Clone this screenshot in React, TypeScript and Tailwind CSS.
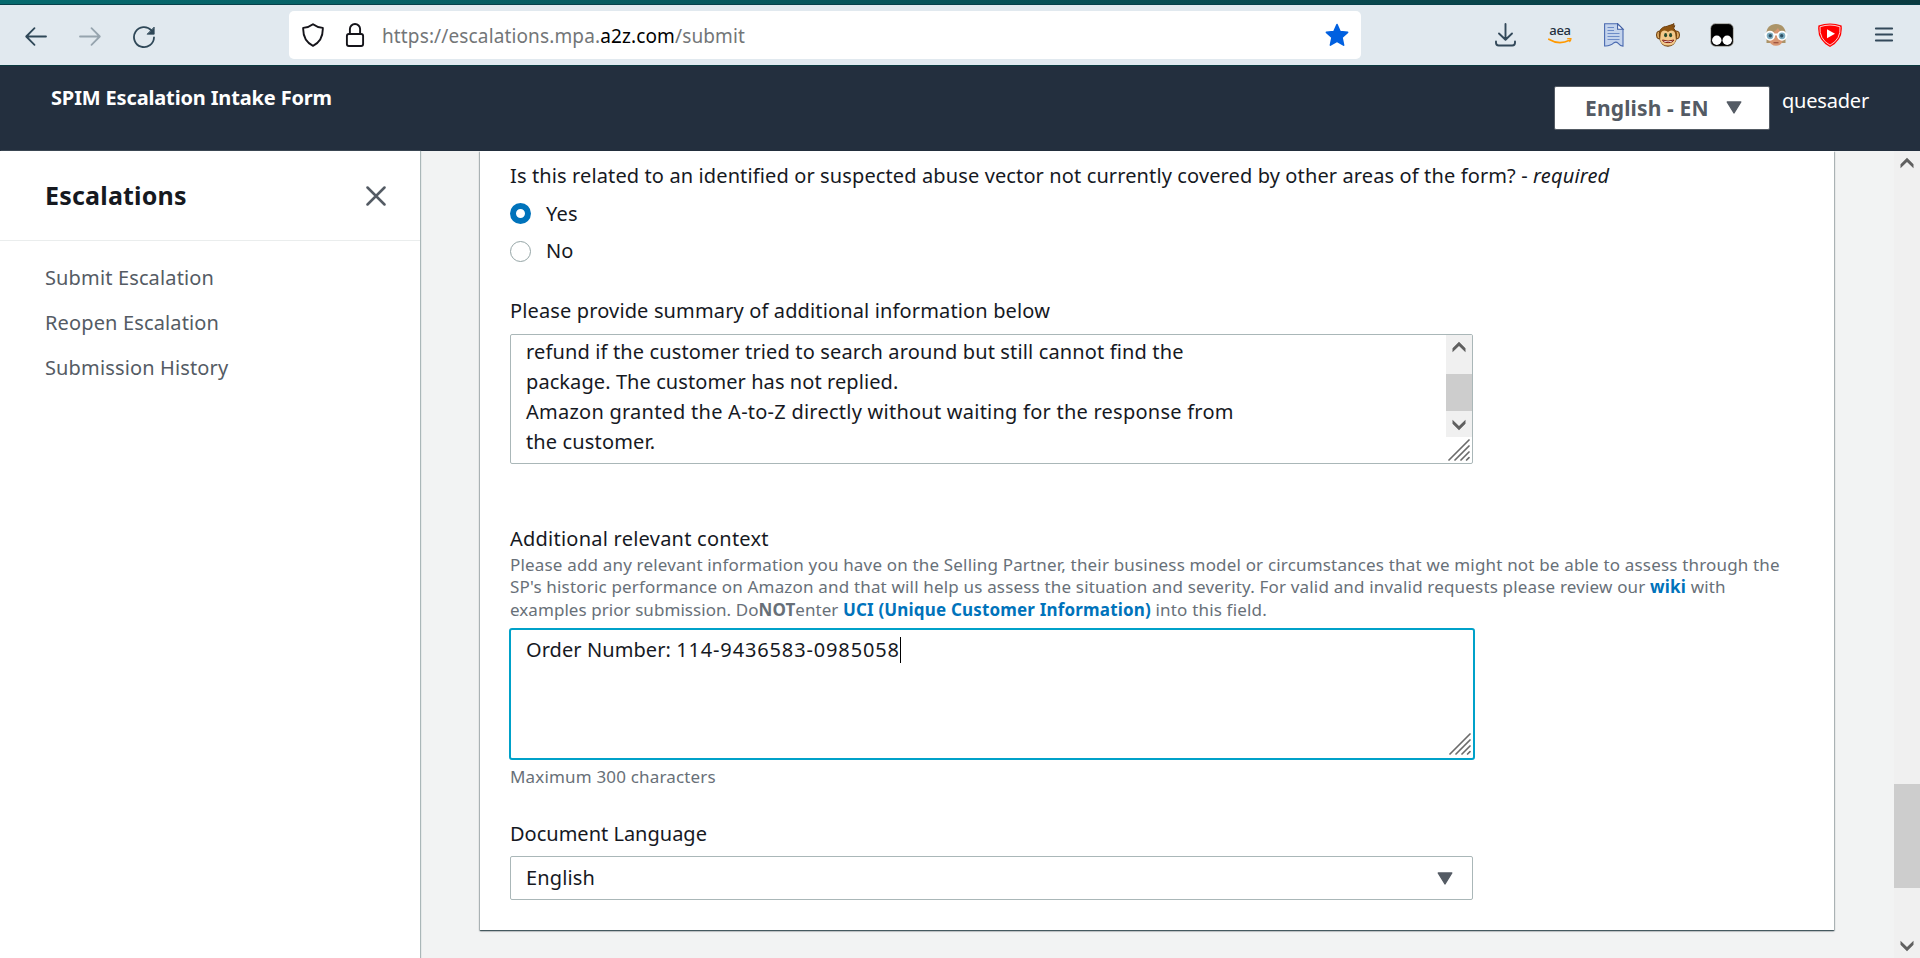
import React, { useState } from 'react'

const navItems = ['Submit Escalation', 'Reopen Escalation', 'Submission History']

function ResizeGrip() {
  return (
    <svg className="block h-[22px] w-[22px]" viewBox="0 0 22 22" stroke="#6b6b6b" strokeWidth="1.7" strokeLinecap="round">
      <path d="M1 21 21 1M7 21 21 7M13 21l8-8M18.6 21l2.400-2.400" />
    </svg>
  )
}

function ScrollArrow({ down }: { down?: boolean }) {
  return (
    <svg className="block h-3 w-4" viewBox="0 0 16 12" fill="#606060">
      {down ? (
        <path d="M1.500.8v4L8 11.200l6.500-6.400v-4L8 7Z" />
      ) : (
        <path d="M1.500 11.200v-4L8 .8l6.500 6.400v4L8 5Z" />
      )}
    </svg>
  )
}

function Caret() {
  return (
    <svg className="h-[13px] w-4" viewBox="0 0 16 13">
      <path d="M1.2 1h13.6L8 12Z" fill="#545b64" stroke="#545b64" strokeWidth="1.4" strokeLinejoin="round" />
    </svg>
  )
}

function BrowserBar() {
  return (
    <div>
      <div className="h-[5px] border-b border-[#06404a] bg-gradient-to-r from-[#066a6e] via-[#075258] to-[#0a3a40]" />
      <div className="flex h-[60px] items-center bg-[#e1e9ef] pl-6 pr-6">
        <div className="flex gap-[30px] pb-px pt-1">
          <svg className="h-6 w-6" viewBox="0 0 24 24" fill="none" stroke="#2f4858" strokeWidth="1.8" strokeLinecap="round" strokeLinejoin="round">
            <path d="M22 11.5H2.4M10.5 3.2 2.2 11.5l8.3 8.3" />
          </svg>
          <svg className="h-6 w-6" viewBox="0 0 24 24" fill="none" stroke="#96a4ae" strokeWidth="1.8" strokeLinecap="round" strokeLinejoin="round">
            <path d="M2 11.5h19.6M13.5 3.2l8.3 8.3-8.3 8.3" />
          </svg>
          <svg className="h-6 w-6" viewBox="0 0 24 24" fill="none" stroke="#2f4858" strokeWidth="1.8" strokeLinecap="round">
            <path d="M19.4 5.4A10 10 0 1 0 22 12.5" />
            <path d="M22.2 2.4v6.8h-6.8Z" fill="#2f4858" strokeWidth=".8" strokeLinejoin="round" />
          </svg>
        </div>

        <div className="ml-[133px] flex h-12 w-[1072px] items-center rounded-[5px] bg-white pl-3 pr-3">
          <svg className="h-6 w-6" viewBox="0 0 24 24" fill="none" stroke="#15141a" strokeWidth="1.9" strokeLinejoin="round">
            <path d="M12 1.2c2.700 2.100 5.900 3.300 9.800 3.700.3 7.800-2 14.100-9.800 18C4.200 19 1.900 12.700 2.200 4.900 6.100 4.500 9.300 3.300 12 1.200Z" />
          </svg>
          <svg className="ml-[18px] h-6 w-6" viewBox="0 0 24 24" fill="none" stroke="#15141a" strokeWidth="1.9">
            <rect x="3.9" y="11" width="16.2" height="12" rx="2" />
            <path d="M6.900 11V6.100a5.100 5.100 0 0 1 10.200 0V11" />
          </svg>
          <div className="ml-[15px] grow whitespace-nowrap pt-[3px] text-[19px] tracking-[0.13px] text-[#737678]">
            https://escalations.mpa.<span className="text-black">a2z.com</span>/submit
          </div>
          <svg className="h-6 w-6" viewBox="0 0 24 24">
            <path
              d="m12 1.500 3.100 7 7.500.8-5.600 5.200 1.600 7.600L12 18.300l-6.600 3.800L7 14.500 1.400 9.300l7.500-.8Z"
              fill="#0060e0"
              stroke="#0060e0"
              strokeWidth="1.6"
              strokeLinejoin="round"
            />
          </svg>
        </div>

        {/* downloads, extensions, menu */}
        <div className="ml-auto flex gap-[30px]">
          <svg className="h-6 w-6" viewBox="0 0 24 24" fill="none" stroke="#33495a" strokeWidth="1.9" strokeLinecap="round" strokeLinejoin="round">
            <path d="M11.500 1v15.500M5 10.500l6.500 6.200L18 10.500M2 18.500v1.300q0 2.700 2.700 2.700h13.600q2.700 0 2.700-2.700v-1.300" />
          </svg>

          <div className="flex h-6 w-6 flex-col items-center">
            <span className="text-[13px] font-medium leading-[15px] tracking-[-0.3px] text-[#232f3e]">aea</span>
            <svg className="h-2 w-6" viewBox="0 0 24 8" fill="none" stroke="#ff9900" strokeLinecap="round">
              <path d="M.8 1.200Q11 7.400 21.500 2.200" strokeWidth="1.6" />
              <path d="M19.500.8q2-.6 3.500-.2-.1 1.600-1.300 3" strokeWidth="1.2" />
            </svg>
          </div>

          <svg className="h-6 w-6" viewBox="0 0 24 24">
            <path d="M2.600.8h13l5.400 5.400v17q-3-.4-5-3-1.800-2-4-.5-3.500 3.600-9.400 3.300Z" fill="#c3d3ec" stroke="#4a6ab0" strokeWidth="1.1" />
            <path d="M15.600.8v5.400H21Z" fill="#fff" stroke="#3e5da2" strokeWidth="1.1" />
            <path d="M5.500 4.500h6.500M5.500 7.500h6.500M5.500 10.500h12M5.500 13.500h12M5.500 16.500h12" stroke="#6d8cc8" strokeWidth="1" />
          </svg>

          <svg className="h-6 w-6" viewBox="0 0 24 24">
            <g stroke="#6b3d0c" strokeWidth="1">
              <ellipse cx="3.2" cy="12" rx="2.7" ry="4" fill="#dba860" />
              <ellipse cx="20.8" cy="12" rx="2.7" ry="4" fill="#dba860" />
              <path d="M3.500 13C2.500 6 7 3.500 11 3.400 13 2 15.500 2.500 18 .6q0 1.500-1.400 2.800 1.500-.2 2.200-.8-.4 1.600-1.300 2.500 3.500 3 3 8.400-.8 9.500-8.500 9.700T3.500 13Z" fill="#8f5512" />
            </g>
            <path d="M4.800 11q.3-3.600 3.900-3.600 2 0 3.300 1.500 1.300-1.500 3.300-1.500 3.600 0 3.900 3.600l.7 5.500q-.7 6-7.900 6t-7.900-6Z" fill="#f2c98b" />
            <ellipse cx="9.6" cy="12.2" rx="1.5" ry="2.1" fill="#264a2c" />
            <ellipse cx="14.6" cy="12.2" rx="1.5" ry="2.1" fill="#264a2c" />
            <path d="M6.500 17q5.500 2.200 11.300 0-.8 2.600-5.700 2.600T6.500 17Z" fill="#fff" stroke="#862015" strokeWidth="1" />
          </svg>

          <svg className="h-6 w-6" viewBox="0 0 24 24">
            <rect x=".6" y=".6" width="22.800" height="22.800" rx="5" fill="#000" stroke="#c9c9c4" strokeWidth=".8" />
            <circle cx="6.8" cy="17.3" r="4.7" fill="#fff" />
            <circle cx="17.2" cy="17.3" r="4.7" fill="#fff" />
          </svg>

          <svg className="h-6 w-6" viewBox="0 0 24 24">
            <path d="M2.500 20V10C2.500 4.500 6.500 1 12 1s9.500 3.500 9.500 9v10Z" fill="#ab9468" />
            <path d="M5 11q5-1 9-6 1.500 4 5 5.500V17q-1.500 5.800-7 5.800T5 17Z" fill="#d89672" />
            <path d="M9.500 19.700h5" stroke="#9a4f3c" strokeWidth="1.2" />
            <path d="M.5 11.500h23" stroke="#fff" strokeWidth="2" />
            <circle cx="6" cy="12.800" r="4.2" fill="#7eaec2" stroke="#fff" strokeWidth="1.7" />
            <circle cx="18" cy="12.800" r="4.2" fill="#7eaec2" stroke="#fff" strokeWidth="1.7" />
            <circle cx="6.3" cy="12.800" r="1.7" fill="#2f5063" />
            <circle cx="17.7" cy="12.800" r="1.7" fill="#2f5063" />
          </svg>

          <svg className="h-6 w-6" viewBox="0 0 24 24">
            <path d="M.4 2.500Q12-1.500 23.600 2.500 25.500 17 12 23.900-1.500 17 .4 2.500Z" fill="#f00" />
            <path d="M2 3.800Q12 .3 22 3.800 23 16.300 12 22.100 1 16.300 2 3.800Z" fill="none" stroke="#fff" strokeWidth=".8" />
            <path d="m9 6.300 8 4.500-8 4.500Z" fill="#fff" />
          </svg>

          <svg className="h-6 w-6" viewBox="0 0 24 24" stroke="#33495a" strokeWidth="1.8" strokeLinecap="round">
            <path d="M3.800 5.500h16.400M3.800 11.500h16.400M3.800 17.500h16.400" />
          </svg>
        </div>
      </div>
    </div>
  )
}

function Header() {
  return (
    <header className="flex h-[86px] items-start justify-between border-t border-[#0b3a40] bg-[#232f3e] pl-[51px] pr-[51px] text-white">
      <h1 className="pt-[17px] text-[20px] font-bold leading-[30px] tracking-[-0.15px]">SPIM Escalation Intake Form</h1>
      <div className="flex gap-3">
        <button className="mt-5 flex h-11 w-[216px] items-center rounded-[2px] border border-[#545b64] bg-white pb-px pl-[30px] text-[#545b64]">
          <span className="whitespace-nowrap text-[21px] font-bold leading-[30px] tracking-[0.15px]">English - EN</span>
          <span className="ml-[17px] flex">
            <Caret />
          </span>
        </button>
        <span className="pt-[21px] text-[20px] leading-[28px] tracking-[-0.2px]">quesader</span>
      </div>
    </header>
  )
}

function Sidebar() {
  return (
    <aside className="z-10 w-[420px] shrink-0 bg-white shadow-[1px_0_1px_0_#aab7b8]">
      <div className="flex h-[90px] items-center justify-between border-b border-[#eaeded] pl-[45px] pr-[34px]">
        <h2 className="pb-0.5 text-[25px] font-bold leading-[30px] tracking-[0.2px] text-[#16191f]">Escalations</h2>
        <svg className="h-5 w-5" viewBox="0 0 20 20" stroke="#545b64" strokeWidth="2.5" strokeLinecap="round">
          <path d="m1.500 1.500 17 17M18.500 1.500l-17 17" />
        </svg>
      </div>
      <nav className="flex flex-col gap-[15px] pl-[45px] pt-[22px] text-[20px] leading-[30px] tracking-[0.14px] text-[#545b64]">
        {navItems.map((item) => (
          <a key={item}>{item}</a>
        ))}
      </nav>
    </aside>
  )
}

function Radio({ label, checked, onSelect }: { label: string; checked: boolean; onSelect: () => void }) {
  return (
    <div className="flex h-[30px] items-center gap-[15px]" onClick={onSelect}>
      {checked ? (
        <span className="-mt-px h-[21px] w-[21px] rounded-full border-[6px] border-[#0073bb] bg-white" />
      ) : (
        <span className="mt-px h-[21px] w-[21px] rounded-full border border-[#95a5a6] bg-white" />
      )}
      <span>{label}</span>
    </div>
  )
}

export default function App() {
  const [abuseVector, setAbuseVector] = useState('Yes')

  return (
    <div className="flex h-[958px] w-[1920px] flex-col overflow-hidden font-['Noto_Sans','Open_Sans',sans-serif]">
      <BrowserBar />
      <Header />
      <div className="flex min-h-0 grow">
        <Sidebar />

        <main className="grow bg-[#f2f3f3] pl-[60px]">
          <section className="h-[779px] w-[1354px] bg-white pl-[30px] pt-2.5 text-[20px] leading-[30px] tracking-[0.14px] text-[#16191f] shadow-[0_1px_1px_0_rgba(0,28,36,0.5),1px_1px_1px_0_rgba(0,28,36,0.15),-1px_1px_1px_0_rgba(0,28,36,0.15),0_1px_2px_0_rgba(0,28,36,0.3)]">
            <div className="whitespace-nowrap tracking-[0.12px]">
              Is this related to an identified or suspected abuse vector not currently covered by other areas of the form? -{' '}
              <i className="tracking-[0.15px]">required</i>
            </div>
            <div className="mt-2 flex flex-col gap-[7px]">
              {['Yes', 'No'].map((option) => (
                <Radio key={option} label={option} checked={abuseVector === option} onSelect={() => setAbuseVector(option)} />
              ))}
            </div>

            <div className="mt-[30px]">Please provide summary of additional information below</div>
            <div className="mt-2 flex h-[130px] w-[963px] justify-between overflow-hidden rounded-[2px] border border-[#aab7b8] pl-[15px]">
              <div className="whitespace-nowrap pt-0.5">
                <div>refund if the customer tried to search around but still cannot find the</div>
                <div className="tracking-[0.08px]">package. The customer has not replied.</div>
                <div className="tracking-[0.24px]">Amazon granted the A-to-Z directly without waiting for the response from</div>
                <div>the customer.</div>
              </div>
              <div className="flex w-[26px] flex-col items-center">
                <div className="flex h-[102px] w-full flex-col items-center bg-[#f0f0f0] pt-1.5">
                  <ScrollArrow />
                  <div className="mt-[21px] h-[37px] w-full bg-[#cdcdcd]" />
                  <div className="mt-2">
                    <ScrollArrow down />
                  </div>
                </div>
                <div className="mt-0.5">
                  <ResizeGrip />
                </div>
              </div>
            </div>

            <div className="mt-[60px] tracking-[0.24px]">Additional relevant context</div>
            <div className="whitespace-nowrap text-[17px] leading-[22.4px] tracking-[0.175px] text-[#687078]">
              Please add any relevant information you have on the Selling Partner, their business model or circumstances that we might not be able to assess through the
              <br />
              SP's historic performance on Amazon and that will help us assess the situation and severity. For valid and invalid requests please review our{' '}
              <a className="font-bold text-[#0073bb]">wiki</a> with
              <br />
              <span className="tracking-[0.06px]">
                examples prior submission. Do<b>NOT</b>enter{' '}
              </span>
              <a className="font-bold text-[#0073bb]">UCI (Unique Customer Information)</a> into this field.
            </div>
            <div className="-ml-px mt-[7px] flex h-[132px] w-[966px] justify-between rounded-[3px] border-2 border-[#00a1c9] pl-[15px]">
              <div className="flex h-[35px] items-end whitespace-pre">
                <span className="tracking-[0.07px]">Order Number: </span>
                <span className="tracking-[0.86px]">114-9436583-0985058</span>
                <span className="mb-0.5 h-[26px] w-px bg-black" />
              </div>
              <div className="self-end pb-[3px] pr-0.5">
                <ResizeGrip />
              </div>
            </div>
            <div className="mt-1.5 text-[17px] leading-[22px] tracking-[0.17px] text-[#687078]">Maximum 300 characters</div>

            <div className="mt-[31px] tracking-normal">Document Language</div>
            <div className="mt-[7px] flex h-11 w-[963px] items-center justify-between rounded-[2px] border border-[#aab7b8] pl-[15px] pr-[19px]">
              <span>English</span>
              <Caret />
            </div>
          </section>
        </main>

        {/* page scrollbar */}
        <div className="flex w-[26px] flex-col items-center bg-[#f0f0f0] pb-1.5 pt-1.5">
          <ScrollArrow />
          <div className="mt-[615px] h-[104px] w-full bg-[#cdcdcd]" />
          <div className="mt-auto">
            <ScrollArrow down />
          </div>
        </div>
      </div>
    </div>
  )
}
